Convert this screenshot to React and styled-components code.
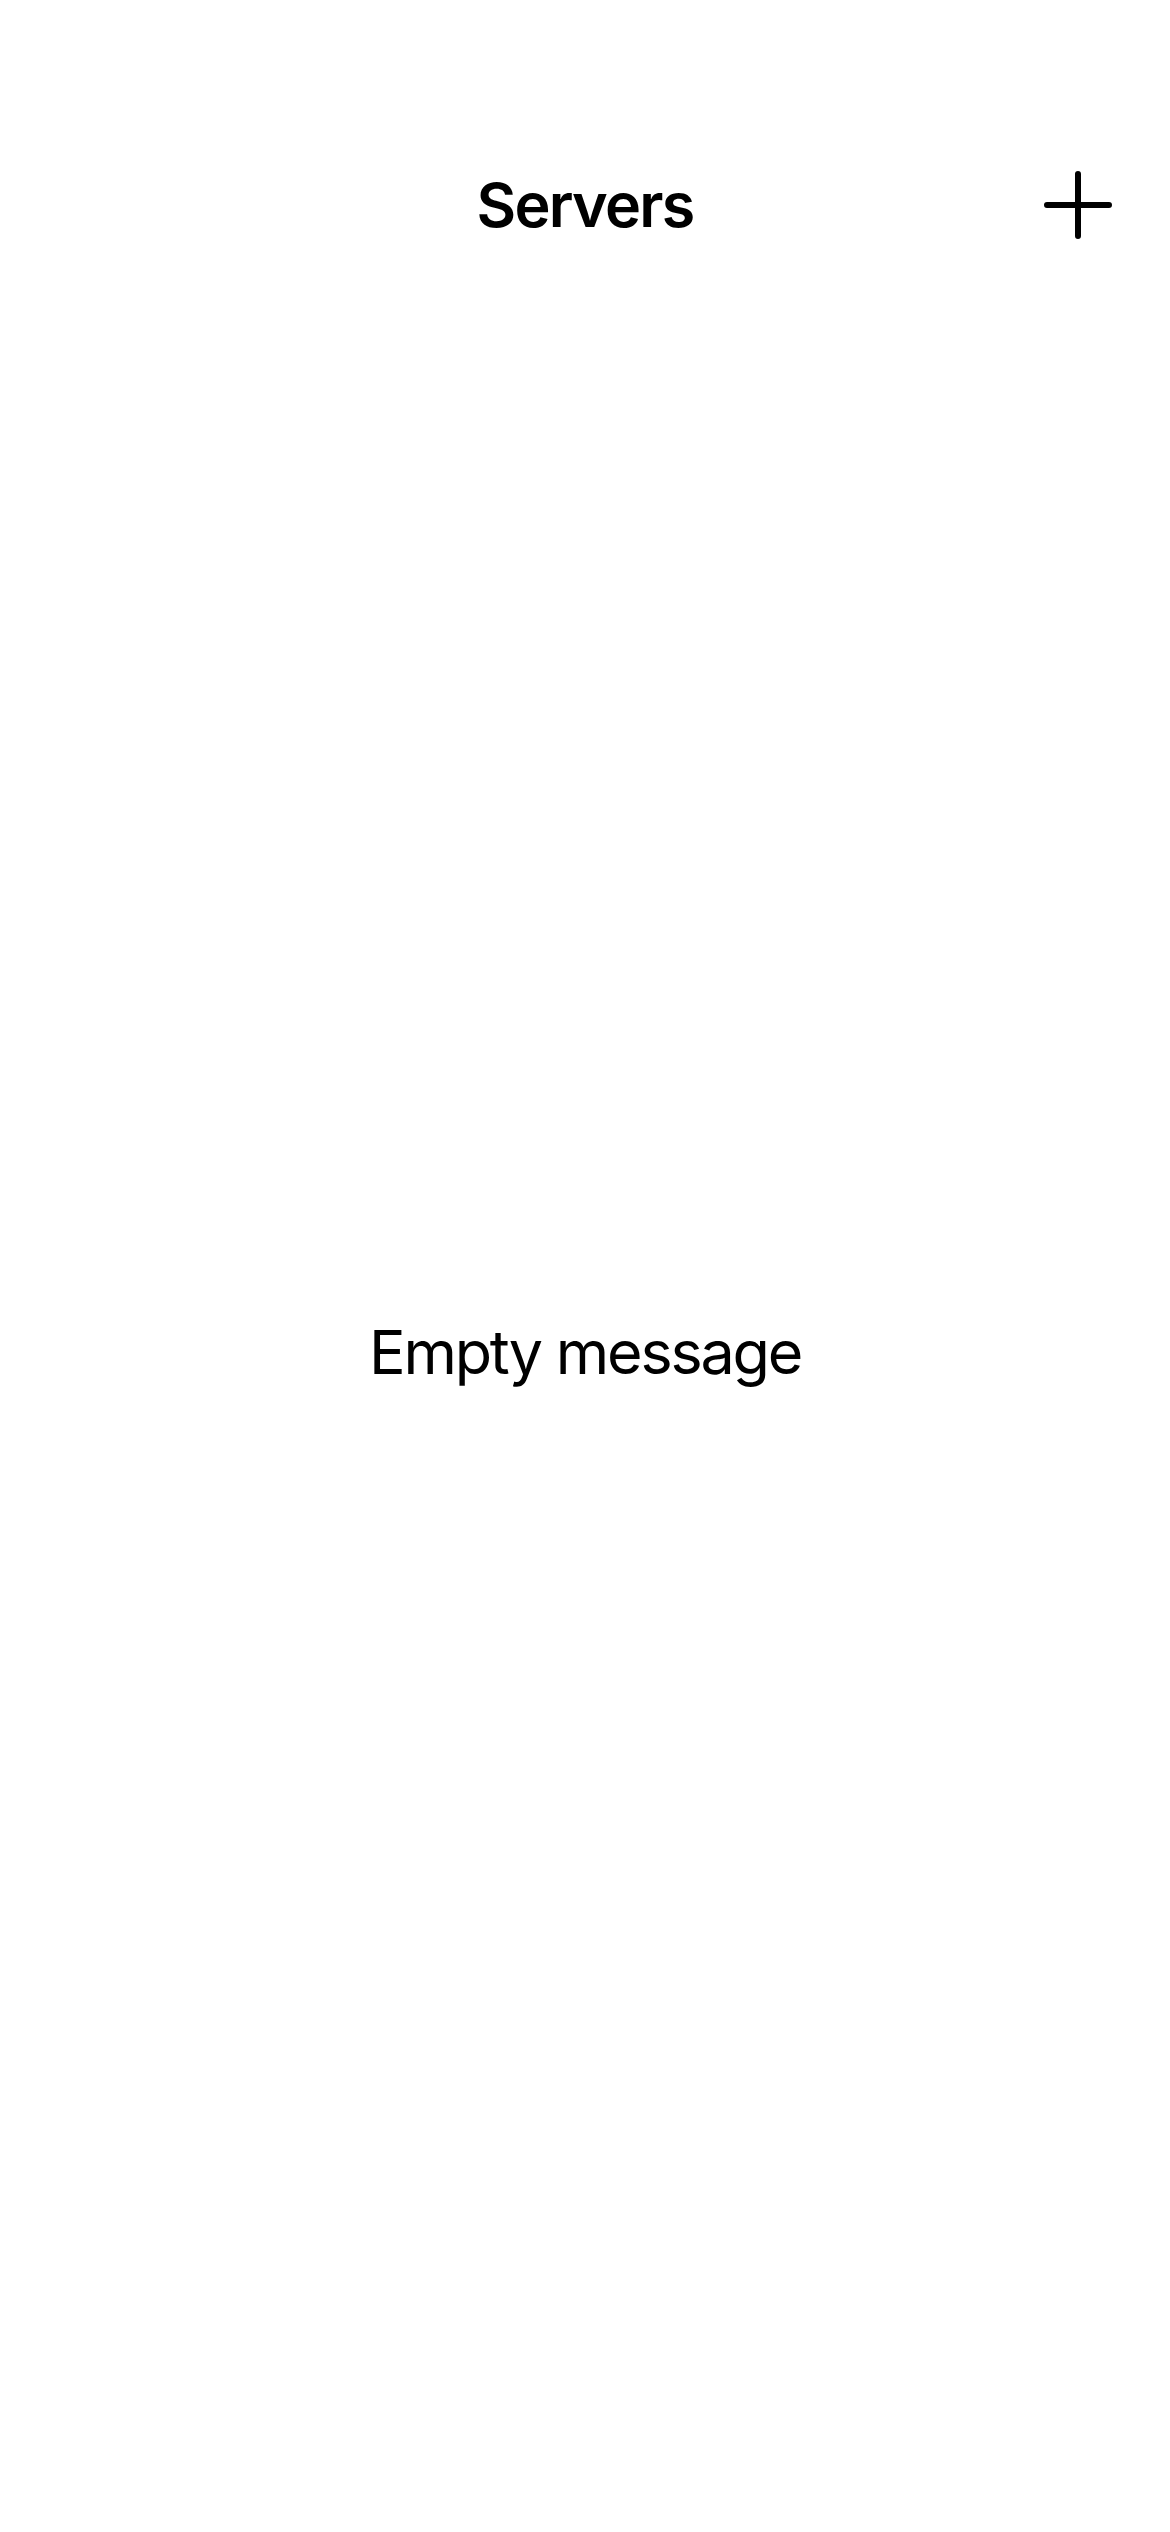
import React from "react";
import styled, { createGlobalStyle } from "styled-components";

const GlobalStyle = createGlobalStyle`
  html, body {
    margin: 0;
    padding: 0;
    background: #ffffff;
  }
  body {
    font-family: Inter, "Liberation Sans", Arial, sans-serif;
    color: #000000;
  }
`;

const Page = styled.div`
  width: 1170px;
  height: 2532px;
  display: flex;
  flex-direction: column;
  background: #ffffff;
`;

const Header = styled.header`
  display: grid;
  grid-template-columns: 1fr auto 1fr;
  align-items: center;
  height: 110px;
  padding: 150px 56px 0 56px;
`;

const Title = styled.h1`
  grid-column: 2;
  margin: 0;
  font-size: 61px;
  font-weight: 600;
  letter-spacing: -1.8px;
  line-height: 1;
`;

const AddButton = styled.button`
  grid-column: 3;
  justify-self: end;
  width: 72px;
  height: 72px;
  padding: 0;
  border: none;
  background: transparent;
  display: flex;
  align-items: center;
  justify-content: center;
  cursor: pointer;
`;

const Body = styled.main`
  flex: 1;
  display: flex;
  align-items: center;
  justify-content: center;
  padding-bottom: 88px;
`;

const EmptyText = styled.p`
  margin: 0;
  font-size: 61px;
  font-weight: 400;
  letter-spacing: -2.2px;
  line-height: 1;
`;

const PlusIcon = () => (
  <svg width="70" height="70" viewBox="0 0 70 70" fill="none">
    <path
      d="M35 4v62M4 35h62"
      stroke="#000"
      strokeWidth="6"
      strokeLinecap="round"
    />
  </svg>
);

export default function App() {
  return (
    <>
      <GlobalStyle />
      <Page>
        <Header>
          <Title>Servers</Title>
          <AddButton aria-label="Add server">
            <PlusIcon />
          </AddButton>
        </Header>
        <Body>
          <EmptyText>Empty message</EmptyText>
        </Body>
      </Page>
    </>
  );
}
